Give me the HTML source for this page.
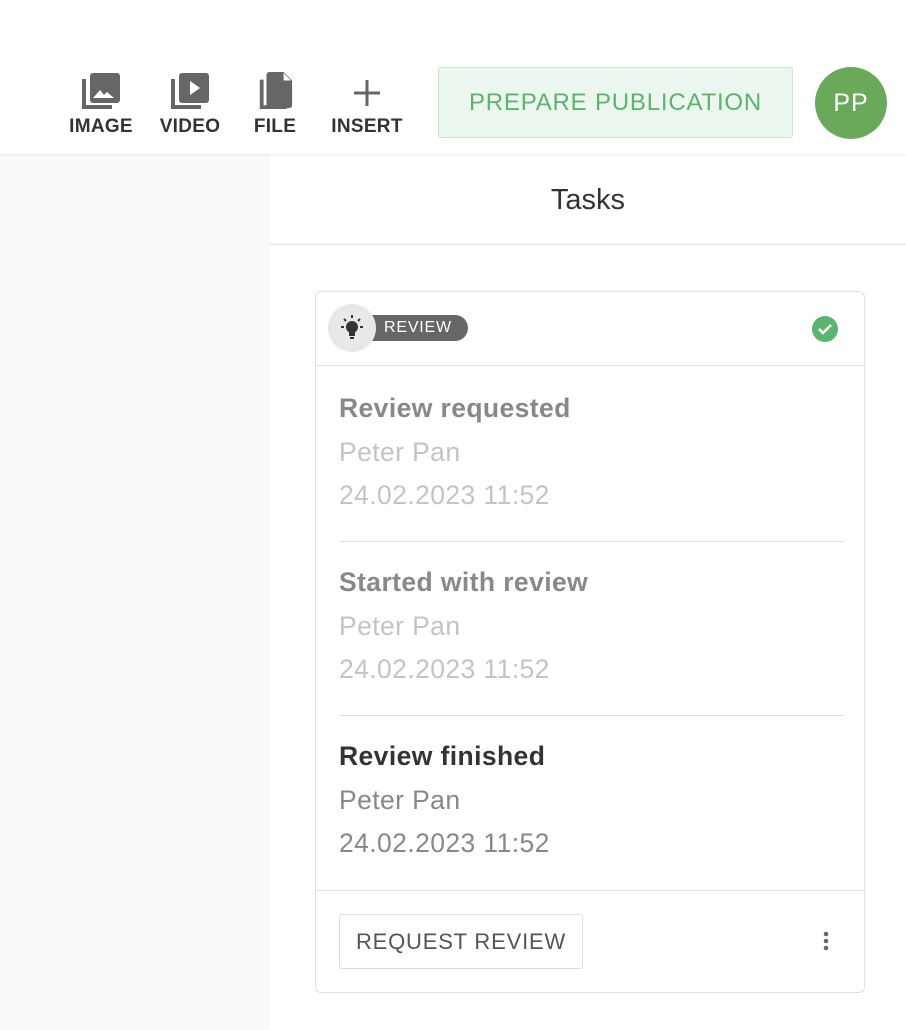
<!DOCTYPE html>
<html><head><style>
body{margin:0;width:906px;height:1030px;position:relative;background:#fafafa;font-family:"Liberation Sans",sans-serif;overflow:hidden}
.top{position:absolute;left:0;top:0;width:906px;height:154px;background:#fff;box-shadow:0 1px 3px rgba(0,0,0,.08);z-index:2}
.tool{position:absolute;top:72px;text-align:center;color:#333;font-size:19px;font-weight:bold;letter-spacing:.3px}
.tool svg{display:block;margin:0 auto 6px}
.btn{position:absolute;left:438px;top:67px;width:353px;height:69px;background:#ebf7ee;border:1px solid #c8e7cf;border-radius:3px;color:#5db36e;font-size:24px;letter-spacing:.8px;line-height:69px;text-align:center}
.av{position:absolute;left:815px;top:67px;width:72px;height:72px;border-radius:50%;background:#6aa85a;color:#fff;font-size:25px;line-height:72px;text-align:center;letter-spacing:1px}
.panel{position:absolute;left:270px;top:154px;width:636px;height:876px;background:#fff}
.ttl{position:absolute;left:0;width:636px;top:30px;text-align:center;font-size:29px;color:#333}
.hr{position:absolute;left:0;top:90px;width:636px;height:1px;background:#e3e3e3}
.card{position:absolute;left:45px;top:137px;width:548px;height:700px;border:1px solid #e0e0e0;border-radius:6px}
.it{position:absolute;left:23px;font-size:26.5px;letter-spacing:.4px}
.it .t{font-weight:bold;color:#888}
.it div{height:43.5px}
.sep{position:absolute;left:23px;width:504px;height:1px;background:#ddd}
</style></head><body>
<div class="top">
<div class="tool" style="left:68px;width:66px"><svg width="40" height="38" viewBox="0 0 40 38"><path d="M1 7v30h30v-4H5V7z" fill="#666"/><rect x="9" y="1" width="30" height="30" rx="3" fill="#666"/><path d="M12 26l7-8 4 5 3-3 7 6z" fill="#fff"/></svg>IMAGE</div>
<div class="tool" style="left:158px;width:64px"><svg width="40" height="38" viewBox="0 0 40 38"><path d="M1 7v30h30v-4H5V7z" fill="#666"/><rect x="9" y="1" width="30" height="30" rx="3" fill="#666"/><path d="M20 9v14l10-7z" fill="#fff"/></svg>VIDEO</div>
<div class="tool" style="left:252px;width:46px"><svg width="40" height="38" viewBox="0 0 40 40"><path d="M4 8v31h28v-4H8V8z" fill="#666"/><path d="M14 0h15l9 9v26a3 3 0 0 1-3 3H14a3 3 0 0 1-3-3V3a3 3 0 0 1 3-3z" fill="#666"/><path d="M29 1v8h8z" fill="#fff"/></svg>FILE</div>
<div class="tool" style="left:330px;width:74px"><svg width="40" height="38" viewBox="0 0 40 38"><path d="M20 8v26M7 21h26" stroke="#666" stroke-width="3"/></svg>INSERT</div>
<div class="btn">PREPARE PUBLICATION</div>
<div class="av">PP</div>
</div>
<div class="panel">
<div class="ttl">Tasks</div><div class="hr"></div>
<div class="card">
<div style="position:absolute;left:34px;top:23px;width:118px;height:26px;background:#666;border-radius:13px;color:#fff;font-size:16px;line-height:26px;letter-spacing:.8px;text-indent:34px">REVIEW</div>
<div style="position:absolute;left:12px;top:12px;width:48px;height:48px;border-radius:50%;background:#e8e8e8"></div>
<svg style="position:absolute;left:20px;top:20px" width="32" height="32" viewBox="0 0 32 32"><circle cx="16" cy="15" r="6" fill="#333"/><rect x="13" y="19" width="6" height="5" fill="#333"/><rect x="14" y="25" width="4" height="2" fill="#333"/><path d="M16 3v3M8 7l2 2M24 7l-2 2M5 15h3M24 15h3" stroke="#333" stroke-width="2"/></svg>
<svg style="position:absolute;left:496px;top:24px" width="26" height="26"><circle cx="13" cy="13" r="13" fill="#5bb46f"/><path d="M7 13l4 4 8-8" stroke="#fff" stroke-width="2.5" fill="none"/></svg>
<div class="sep" style="left:0;width:548px;top:73px;background:#e3e3e3"></div>
<div class="it" style="top:101px"><div class="t">Review requested</div><div style="color:#c4c4c4">Peter Pan</div><div style="color:#c4c4c4">24.02.2023 11:52</div></div>
<div class="sep" style="top:249px"></div>
<div class="it" style="top:275px"><div class="t">Started with review</div><div style="color:#c4c4c4">Peter Pan</div><div style="color:#c4c4c4">24.02.2023 11:52</div></div>
<div class="sep" style="top:423px"></div>
<div class="it" style="top:449px"><div class="t" style="color:#333">Review finished</div><div style="color:#888">Peter Pan</div><div style="color:#888">24.02.2023 11:52</div></div>
<div class="sep" style="left:0;width:548px;top:598px;background:#e3e3e3"></div>
<div style="position:absolute;left:23px;top:622px;width:242px;height:53px;border:1px solid #ddd;border-radius:3px;color:#555;font-size:22px;line-height:53px;text-align:center;letter-spacing:.8px">REQUEST REVIEW</div>
<svg style="position:absolute;left:504px;top:638px" width="12" height="24"><circle cx="6" cy="4" r="2.3" fill="#666"/><circle cx="6" cy="11" r="2.3" fill="#666"/><circle cx="6" cy="18" r="2.3" fill="#666"/></svg>
</div>
</div>
</body></html>
